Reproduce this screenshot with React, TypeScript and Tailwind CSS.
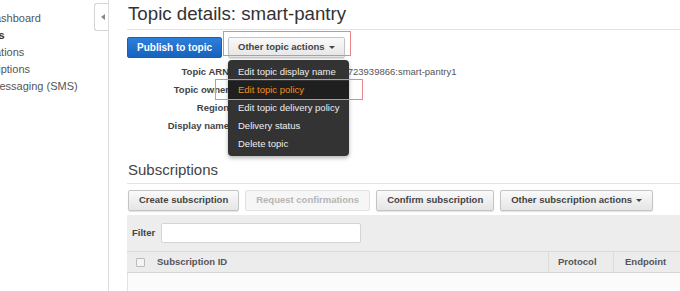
import React from "react";

const font = { fontFamily: '"Liberation Sans", Arial, sans-serif' };

function GrayButton({ children, disabled, px = "px-[10px]" }: { children: React.ReactNode; disabled?: boolean; px?: string }) {
  return (
    <div
      className={
        "h-[21px] flex items-center rounded-[2px] border text-[9.5px] font-bold whitespace-nowrap " +
        px +
        " " +
        (disabled
          ? "border-[#e2e2e2] bg-[#f6f6f6] text-[#b5b5b5]"
          : "border-[#c4c4c4] bg-gradient-to-b from-[#fafafa] to-[#e5e5e5] text-[#444] shadow-[0_1px_1px_rgba(0,0,0,0.12)]")
      }
    >
      {children}
    </div>
  );
}

function Caret() {
  return <span className="ml-[4px] inline-block w-0 h-0 border-l-[3px] border-r-[3px] border-t-[3px] border-l-transparent border-r-transparent border-t-[#444]" />;
}

export default function App() {
  return (
    <div className="w-[680px] h-[291px] overflow-hidden bg-white flex text-[#444]" style={font}>
      {/* Sidebar */}
      <div className="relative w-[109px] shrink-0 border-r border-[#dcdcdc] overflow-hidden">
        <div className="pt-[10px] flex flex-col text-[11px] leading-[17px] text-[#555] whitespace-nowrap">
          <div className="ml-[-13px]">Dashboard</div>
          <div className="ml-[-30px] font-bold text-[#333]">Topics</div>
          <div className="ml-[-35px]">Applications</div>
          <div className="ml-[-36px]">Subscriptions</div>
          <div className="ml-[-33px]">Text messaging (SMS)</div>
        </div>
        <div className="absolute left-[94px] top-[3px] w-[16px] h-[28px] border border-r-0 border-[#d4d4d4] rounded-l-[3px] bg-white flex items-center justify-center">
          <span className="w-0 h-0 border-t-[3.5px] border-b-[3.5px] border-r-[4px] border-t-transparent border-b-transparent border-r-[#888] ml-[1px]" />
        </div>
      </div>

      {/* Main */}
      <div className="relative flex-1 pl-[18px] flex flex-col">
        <div className="pl-[1px] text-[18.7px] leading-[26px] text-[#333] pt-[1px] pb-[2px] border-b border-[#e3e3e3]">
          Topic details: smart-pantry
        </div>

        <div className="mt-[7px] flex items-center gap-[6px]">
          <div className="h-[21px] px-[9px] flex items-center rounded-[2px] bg-gradient-to-b from-[#2d7fdc] to-[#1762bd] border border-[#1a5fb4] text-white text-[10px] font-bold whitespace-nowrap">
            Publish to topic
          </div>
          <div className="relative">
            <GrayButton px="px-[9px]">
              Other topic actions
              <Caret />
            </GrayButton>
            <div className="absolute left-0 top-[23px] w-[121px] rounded-[4px] bg-[#333333] py-[3px] z-10 shadow-[0_2px_4px_rgba(0,0,0,0.3)]">
              {[
                "Edit topic display name",
                "Edit topic policy",
                "Edit topic delivery policy",
                "Delivery status",
                "Delete topic",
              ].map((t, i) => (
                <div
                  key={t}
                  className={
                    "h-[18px] flex items-center pl-[10px] text-[9.5px] whitespace-nowrap " +
                    (i === 1 ? "bg-[#1f1f1f] text-[#f0901e]" : "text-[#eeeeee]")
                  }
                >
                  {t}
                </div>
              ))}
            </div>
          </div>
        </div>

        <div className="mt-[5px] grid grid-cols-[102px_1fr] gap-x-[8px] text-[9.5px] leading-[18px]">
          <div className="text-right font-bold text-[#444]">Topic ARN</div>
          <div className="text-[#555] whitespace-nowrap">arn:aws:sns:us-east-1:116723939866:smart-pantry1</div>
          <div className="text-right font-bold text-[#444]">Topic owner</div>
          <div className="text-[#555]">116723939866</div>
          <div className="text-right font-bold text-[#444]">Region</div>
          <div className="text-[#555]">us-east-1</div>
          <div className="text-right font-bold text-[#444]">Display name</div>
          <div className="text-[#555]"></div>
        </div>

        <div className="pl-[1px] mt-[25px] text-[15px] leading-[20px] text-[#444] pb-[3px] border-b border-[#e3e3e3]">
          Subscriptions
        </div>

        <div className="mt-[6px] flex items-center gap-[6px] pl-[1px]">
          <GrayButton>Create subscription</GrayButton>
          <GrayButton disabled>Request confirmations</GrayButton>
          <GrayButton>Confirm subscription</GrayButton>
          <GrayButton>
            Other subscription actions
            <Caret />
          </GrayButton>
        </div>

        <div className="mt-[4px] h-[37px] bg-[#ededed] flex items-center pl-[5px] gap-[6px] border-b border-[#dadada]">
          <span className="text-[9.5px] font-bold text-[#444]">Filter</span>
          <div className="w-[200px] h-[20px] bg-white border border-[#d4d4d4] rounded-[2px]" />
        </div>

        <div className="h-[21px] bg-[#ececec] flex items-center text-[9.5px] font-bold text-[#555] border-b border-[#d6d6d6]">
          <div className="w-[25px] flex justify-center pl-[1px]">
            <span className="w-[9px] h-[9px] border border-[#bbb] bg-[#f4f4f4] rounded-[1px]" />
          </div>
          <div className="w-[396px] pl-[5px]">Subscription ID</div>
          <div className="w-[65px] h-full border-l border-[#dcdcdc] flex items-center pl-[9px]">Protocol</div>
          <div className="flex-1 h-full border-l border-[#dcdcdc] flex items-center pl-[11px]">Endpoint</div>
        </div>
        <div className="flex-1 bg-[#fbfbfb] border-l border-[#e3e3e3]" />

        {/* red annotation boxes */}
        <div className="absolute left-[114px] top-[31px] w-[128px] h-[25px] border border-[#e8868a] pointer-events-none z-20" />
        <div className="absolute left-[106px] top-[79px] w-[148px] h-[21px] border border-[#e8868a] pointer-events-none z-20" />
      </div>
    </div>
  );
}
